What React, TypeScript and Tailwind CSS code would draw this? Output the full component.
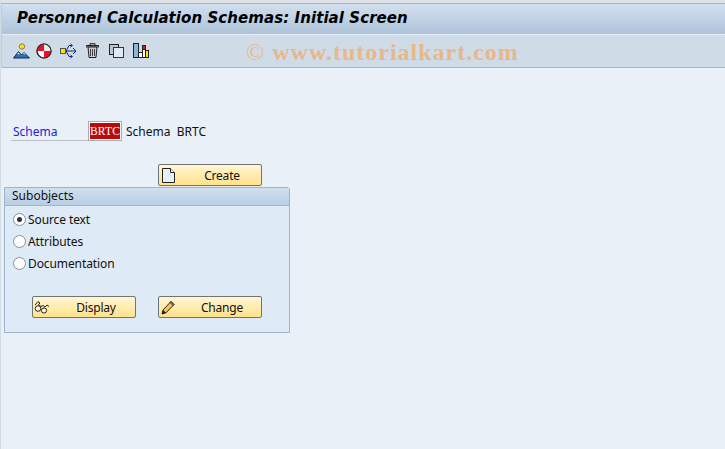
import React from "react";

const uiFont = "font-['Noto_Sans','Open_Sans',sans-serif]";

function PersonIcon() {
  return (
    <svg width="17" height="16" viewBox="0 0 17 16">
      <circle cx="9" cy="3.5" r="2.7" fill="#ffe400" stroke="#555" strokeWidth="0.7" />
      <path d="M0.5 15 L5.5 8.5 L8.5 12 L11 9.5 L16.5 15 Z" fill="#2f6fb0" stroke="#0b2a63" strokeWidth="1" />
      <path d="M4.2 11 L5.5 9.5 L7 11.2 Z M10 11 L11 10 L12.6 11.6 Z" fill="#fff" />
    </svg>
  );
}

function ExecIcon() {
  return (
    <svg width="16" height="16" viewBox="0 0 16 16">
      <circle cx="8" cy="8" r="7" fill="#fff" stroke="#333" strokeWidth="1.2" />
      <path d="M8 8 L8 1 A7 7 0 0 0 1 8 Z M8 8 L15 8 A7 7 0 0 1 8 15 Z" fill="#e8112d" />
      <path d="M8 8 L8 1 A7 7 0 0 1 15 8 Z" fill="#f4e9e9" />
      <circle cx="8" cy="8" r="7" fill="none" stroke="#333" strokeWidth="1.2" />
    </svg>
  );
}

function TreeIcon() {
  return (
    <svg width="17" height="16" viewBox="0 0 17 16">
      <rect x="0.5" y="5.5" width="5" height="5" fill="#ffe400" stroke="#555" />
      <path d="M5.5 8 H16 M13 5 L16 8 L13 11 M6 8 L9 2.5 H12 M6 8 L9 13.5 H12 M10.5 1 L12.5 2.5 L10.5 4 M10.5 12 L12.5 13.5 L10.5 15" fill="none" stroke="#0a2a8c" strokeWidth="1" />
    </svg>
  );
}

function TrashIcon() {
  return (
    <svg width="13" height="15" viewBox="0 0 13 15">
      <path d="M0.5 2.5 H12.5 V4 H0.5 Z M4 2 V0.7 H9 V2" fill="#ccc" stroke="#222" strokeWidth="1" />
      <path d="M2 4 L3 14.5 H10 L11 4 Z" fill="#c9cdd1" stroke="#222" strokeWidth="1" />
      <path d="M4.5 6 V13 M6.5 6 V13 M8.5 6 V13" stroke="#444" strokeWidth="1" />
    </svg>
  );
}

function CopyIcon() {
  return (
    <svg width="15" height="14" viewBox="0 0 15 14">
      <rect x="0.5" y="0.5" width="9" height="10" fill="#bfc6cf" stroke="#222" />
      <rect x="4.5" y="3.5" width="10" height="10" fill="#dfeaf5" stroke="#8c1010" />
    </svg>
  );
}

function ChartIcon() {
  return (
    <svg width="16" height="15" viewBox="0 0 16 15">
      <rect x="0.5" y="0.5" width="5" height="14" fill="#8fb4d8" stroke="#222" />
      <rect x="5.5" y="9.5" width="4" height="5" fill="#fff" stroke="#222" />
      <rect x="9.5" y="3.5" width="3" height="11" fill="#fff" stroke="#222" />
      <rect x="9.5" y="2.5" width="3" height="4" fill="#d81e1e" stroke="#222" />
      <rect x="12.5" y="7.5" width="3" height="7" fill="#ffe400" stroke="#222" />
    </svg>
  );
}

function PageIcon() {
  return (
    <svg width="13" height="15" viewBox="0 0 13 15">
      <path d="M0.5 0.5 H8.5 L12.5 4.5 V14.5 H0.5 Z" fill="#e6f0f8" stroke="#222" />
      <path d="M8.5 0.5 V4.5 H12.5" fill="#fff" stroke="#222" />
    </svg>
  );
}

function GlassesIcon() {
  return (
    <svg width="16" height="14" viewBox="0 0 16 14">
      <path d="M1 5 L4 1.5 L6 3 L4.5 4.5 L7 6.5 L9 5.5 L11 7 L13 5 L15 6.5" fill="none" stroke="#222" strokeWidth="1" />
      <ellipse cx="4" cy="8.5" rx="2.8" ry="2.8" fill="#fff8d8" stroke="#222" />
      <ellipse cx="10" cy="10.5" rx="2.6" ry="2.6" fill="#fff8d8" stroke="#222" />
    </svg>
  );
}

function PencilIcon() {
  return (
    <svg width="14" height="15" viewBox="0 0 14 15">
      <path d="M1 14 L2 10 L10 1.5 L13 4.5 L5 12.8 Z" fill="#f6c64a" stroke="#222" strokeWidth="1" />
      <path d="M9 2.5 L10 1.5 L13 4.5 L12 5.5 Z" fill="#e36b6b" stroke="#222" strokeWidth="0.8" />
      <path d="M1 14 L2 10 L5 12.8 Z" fill="#222" />
    </svg>
  );
}

function SapButton({ icon, label }: { icon: React.ReactNode; label: string }) {
  return (
    <button className="w-[104px] h-[22px] rounded-[2px] border border-[#6f7378] bg-gradient-to-b from-[#fff6d2] to-[#ffe28a] flex items-center pl-[1px] text-[12px] text-[#111] relative">
      <span className="w-4 flex justify-center">{icon}</span>
      <span className="flex-1 text-center pl-[7px] pt-[1px] tracking-[-0.2px]">{label}</span>
    </button>
  );
}

function Radio({ label, checked }: { label: string; checked?: boolean }) {
  return (
    <div className="h-[22px] flex items-center pl-[8px] text-[12px] text-[#111] tracking-[-0.1px]">
      <span className="w-[13px] h-[13px] rounded-full border-[1.5px] border-[#8a8f94] bg-white flex items-center justify-center mr-[2px]">
        {checked && <span className="w-[5px] h-[5px] rounded-full bg-[#2b3340]" />}
      </span>
      <span className="pt-[1px]">{label}</span>
    </div>
  );
}

export default function App() {
  return (
    <div className={`w-[725px] h-[449px] overflow-hidden bg-[#e9f0f8] relative border-l border-[#d3dbe4] ${uiFont}`}>
      <div className="h-[3px] bg-[#dfe3e8]" />
      <div className="h-[1px] bg-[#a9b4c0]" />
      <div className="border-l border-[#c5ced8]">
        <div className="h-[31px] bg-gradient-to-b from-[#d2e0ee] to-[#aec3da] border-b border-[#e4edf5] flex items-center pl-[15px] pb-[1px]">
          <h1 className="font-['DejaVu_Sans',sans-serif] font-bold italic text-[15px] text-black tracking-[0.07px] whitespace-nowrap">
            Personnel Calculation Schemas: Initial Screen
          </h1>
        </div>
        <div className="h-[33px] bg-[#cfdce8] border-b border-[#a9b6c6] flex items-center pl-[11px] pb-[1px]">
          <span className="w-[17px] flex justify-center"><PersonIcon /></span>
          <span className="w-[16px] ml-[6px] flex justify-center"><ExecIcon /></span>
          <span className="w-[17px] ml-[8px] flex justify-center"><TreeIcon /></span>
          <span className="w-[13px] ml-[9px] flex justify-center"><TrashIcon /></span>
          <span className="w-[15px] ml-[10px] flex justify-center"><CopyIcon /></span>
          <span className="w-[16px] ml-[9px] flex justify-center"><ChartIcon /></span>
        </div>
      </div>

      <div className="absolute left-[245px] top-[37px] font-['Liberation_Serif',serif] font-bold text-[24px] leading-[30px] text-[#e6b88a] tracking-[1px] whitespace-nowrap">
        <span className="font-normal">©</span> www.tutorialkart.com
      </div>

      <div className="pt-[51px]">
        <div className="ml-[10px] h-[22px] flex items-start text-[12px]">
          <div className="w-[77px] h-[22px] border-b border-[#b9bfc6] pl-[2px] pt-[4px] text-[#2222dd]">Schema</div>
          <div className="w-[34px] h-[20px] mt-[2px] border border-[#a8adb3] bg-white p-[1px]">
            <div className="h-full bg-[#bb0a0a] text-white font-['Liberation_Serif',serif] text-[11.5px] leading-[16px] text-center tracking-[0.2px]">BRTC</div>
          </div>
          <span className="ml-[4px] pt-[4px] text-[#111] whitespace-pre">Schema  BRTC</span>
        </div>

        <div className="ml-[157px] mt-[23px]">
          <SapButton icon={<PageIcon />} label="Create" />
        </div>

        <div className="ml-[3px] mt-[1px] w-[286px] h-[146px] border border-[#9db4cf] rounded-tr-[3px] bg-[#deeaf5]">
          <div className="h-[18px] bg-gradient-to-b from-[#cfe0ef] to-[#b9cfe5] border-b border-[#9db4cf] pl-[7px] pb-[1px] flex items-center text-[12px] text-[#111]">
            Subobjects
          </div>
          <div className="pt-[2px]">
            <Radio label="Source text" checked />
            <Radio label="Attributes" />
            <Radio label="Documentation" />
          </div>
          <div className="mt-[22px] ml-[27px] flex gap-[22px]">
            <SapButton icon={<GlassesIcon />} label="Display" />
            <SapButton icon={<PencilIcon />} label="Change" />
          </div>
        </div>
      </div>
    </div>
  );
}
